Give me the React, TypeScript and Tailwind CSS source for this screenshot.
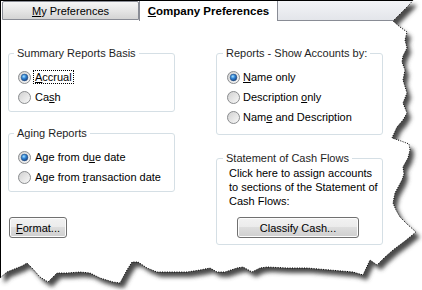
import React from 'react';

// torn paper edge, right side top->bottom then bottom right->left
const edge: [number, number][] = [
  [413, 0], [410, 4], [404, 10], [398, 16], [393, 21], [400, 27], [407, 32], [405, 40], [407, 48],
  [403, 56], [402, 62], [405, 70], [403, 80], [407, 93], [403, 103], [407, 113], [403, 120],
  [397, 127], [392, 138], [401, 141], [409, 144], [410, 150], [408, 158], [403, 167], [404, 174],
  [402, 180], [395, 193], [393, 203], [396, 210], [400, 217], [407, 224], [416, 232], [405, 241],
  [393, 250], [384, 258], [377, 265], [370, 260], [363, 275], [353, 272], [330, 270], [307, 268],
  [287, 268], [267, 267], [260, 268], [252, 272], [243, 267], [237, 268], [225, 272], [217, 272],
  [210, 268], [200, 270], [187, 272], [173, 272], [157, 272], [147, 268], [138, 262], [132, 262],
  [127, 270], [120, 283], [113, 282], [100, 278], [90, 273], [80, 272], [67, 273], [57, 273],
  [48, 282], [40, 277], [32, 268], [27, 263], [22, 266], [17, 268], [7, 272], [0, 278],
];

const pts = edge.map(([x, y]) => `${x},${y}`).join(' L');
const paperD = `M0,0 L${pts} Z`;
const outsideD = `M0,0 H422 V290 H0 Z ${paperD}`;

const TornEdge = () => (
  <svg className="absolute inset-0 pointer-events-none" width="422" height="290" viewBox="0 0 422 290">
    <defs>
      <filter id="tornShadow" x="-10%" y="-10%" width="130%" height="130%">
        <feGaussianBlur stdDeviation="2.2" />
      </filter>
      <clipPath id="tornOutside">
        <path d={outsideD} clipRule="evenodd" />
      </clipPath>
    </defs>
    <path d={outsideD} fill="#fff" fillRule="evenodd" />
    <g clipPath="url(#tornOutside)">
      <path d={paperD} fill="#4a4a4a" transform="translate(4,5)" filter="url(#tornShadow)" />
    </g>
    <polyline
      points={edge.map(([x, y]) => `${x},${y}`).join(' ')}
      fill="none"
      stroke="#000"
      strokeWidth="1"
      strokeDasharray="1 1.4"
    />
  </svg>
);

const Radio = ({ checked }: { checked?: boolean }) => (
  <svg width="13" height="13" viewBox="0 0 13 13" className="shrink-0">
    <defs>
      <linearGradient id="radioBg" x1="0" y1="0" x2="1" y2="1">
        <stop offset="0" stopColor="#cfcfcf" />
        <stop offset="1" stopColor="#fafafa" />
      </linearGradient>
      <radialGradient id="radioDot" cx="0.4" cy="0.35" r="0.7">
        <stop offset="0" stopColor="#a8e4ff" />
        <stop offset="0.45" stopColor="#2f82d4" />
        <stop offset="1" stopColor="#143c78" />
      </radialGradient>
    </defs>
    <circle cx="6.5" cy="6.5" r="6" fill="url(#radioBg)" stroke="#8b8d8f" />
    {checked && <circle cx="6.5" cy="6.5" r="3.4" fill="url(#radioDot)" stroke="#2a4f7c" strokeWidth="0.5" />}
  </svg>
);

const Option = ({ checked, gap, children }: { checked?: boolean; gap: string; children: React.ReactNode }) => (
  <label className={`flex h-[20px] items-center ${gap}`}>
    <Radio checked={checked} />
    <span>{children}</span>
  </label>
);

const btn =
  'h-[21px] rounded-[3px] border border-[#707070] bg-[linear-gradient(#f2f2f2,#ebebeb_50%,#dddddd_50%,#cfcfcf)] shadow-[inset_0_0_0_1px_#fcfcfc] text-[11px] leading-[14px] text-black';

export default function App() {
  return (
    <div className="relative w-[422px] h-[290px] overflow-hidden bg-white text-[11px] leading-[14px] text-black font-['Liberation_Sans',Arial,sans-serif]">
      <div className="h-full border-l border-t border-black">
        {/* Tabs */}
        <div className="flex h-[20px] pl-[1px]">
          <div className="w-[137px] h-[19px] flex items-center justify-center border border-[#898c95] rounded-t-[2px] bg-[linear-gradient(#f6f6f6,#e4e4e4_55%,#d4d4d4)]">
            <span>
              <span className="underline">M</span>y Preferences
            </span>
          </div>
          <div className="w-[139px] h-[20px] flex items-center justify-center border-x border-[#898c95] bg-white font-bold text-[11.5px]">
            <span>
              <span className="underline">C</span>ompany Preferences
            </span>
          </div>
          <div className="flex-1 h-[20px] border-b border-[#898c95] bg-[linear-gradient(#f3f4f7,#e3e5ea)]" />
        </div>

        {/* Content */}
        <div className="grid grid-cols-[167px_167px] gap-x-[41px] pl-[7px] pt-[25px]">
          <div className="flex flex-col items-start">
            <fieldset className="w-full border border-[#d5dfe5] rounded-[3px] pl-[9px] pt-[7px] pb-[4px]">
              <legend className="-ml-[4px] px-[3px] text-[#1e1e1e]">Summary Reports Basis</legend>
              <Option checked gap="gap-[3px]">
                <span className="px-[1px] outline outline-1 outline-dotted outline-black">
                  <span className="underline">A</span>ccrual
                </span>
              </Option>
              <Option gap="gap-[4px]">
                Ca<span className="underline">s</span>h
              </Option>
            </fieldset>

            <fieldset className="mt-[14px] w-full border border-[#d5dfe5] rounded-[3px] pl-[9px] pt-[7px] pb-[4px]">
              <legend className="-ml-[4px] px-[3px] text-[#1e1e1e]">Aging Reports</legend>
              <Option checked gap="gap-[4px]">
                Age from d<span className="underline">u</span>e date
              </Option>
              <Option gap="gap-[4px]">
                Age from <span className="underline">t</span>ransaction date
              </Option>
            </fieldset>

            <button type="button" className={`${btn} mt-[25px] ml-[1px] w-[58px] h-[20px]`}>
              <span className="underline">F</span>ormat...
            </button>
          </div>

          <div className="flex flex-col items-start">
            <fieldset className="w-full border border-[#d5dfe5] rounded-[3px] pl-[10px] pt-[7px] pb-[7px]">
              <legend className="-ml-[4px] px-[3px] text-[#1e1e1e]">Reports - Show Accounts by:</legend>
              <Option checked gap="gap-[3px]">
                <span className="underline">N</span>ame only
              </Option>
              <Option gap="gap-[3px]">
                Description <span className="underline">o</span>nly
              </Option>
              <Option gap="gap-[3px]">
                Nam<span className="underline">e</span> and Description
              </Option>
            </fieldset>

            <fieldset className="mt-[16px] w-full border border-[#d5dfe5] rounded-[3px] pl-[10px] pt-[1px] pb-[6px]">
              <legend className="-ml-[4px] px-[3px] text-[#1e1e1e]">Statement of Cash Flows</legend>
              <p className="pl-[2px]">
                Click here to assign accounts
                <br />
                to sections of the Statement of
                <br />
                Cash Flows:
              </p>
              <button type="button" className={`${btn} mt-[9px] ml-[10px] w-[122px]`}>
                Classify Cash...
              </button>
            </fieldset>
          </div>
        </div>
      </div>
      <TornEdge />
    </div>
  );
}
